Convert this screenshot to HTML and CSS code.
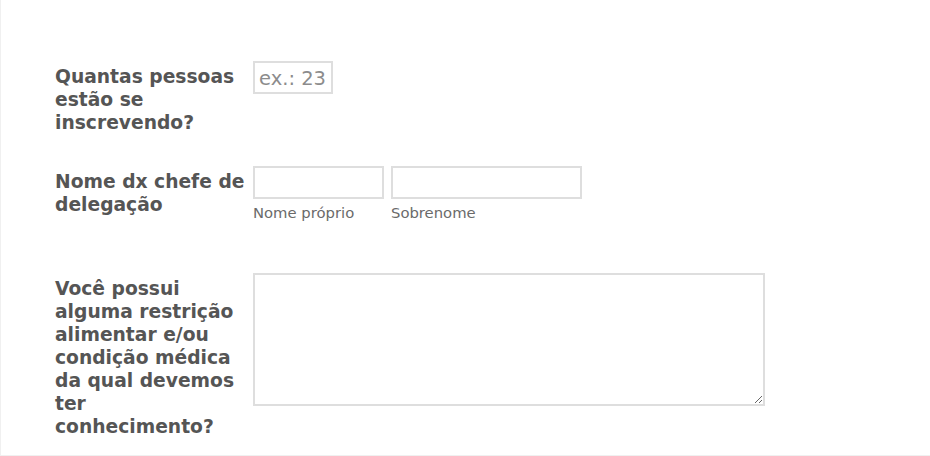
FILE: index.html
```html
<!DOCTYPE html>
<html lang="pt">

<head>
  <meta charset="UTF-8">
  <meta name="viewport" content="width=device-width, initial-scale=1.0">
  <title>Inscrição</title>
  <link rel="stylesheet" href="styles.css">
</head>

<body>
  <div class="form_all">
    <ul class="form_section">
      <li class="form_line line_count">
        <label class="form_label" for="input_count">Quantas pessoas estão se inscrevendo?</label>
        <div class="form_input">
          <input type="text" id="input_count" class="form_textbox count_box" placeholder="ex.: 23">
        </div>
      </li>

      <li class="form_line line_name">
        <label class="form_label" for="first_name">Nome dx chefe de delegação</label>
        <div class="form_input name_group">
          <span class="name_part">
            <input type="text" id="first_name" class="form_textbox first_box">
            <label class="form_sublabel" for="first_name">Nome próprio</label>
          </span>
          <span class="name_part">
            <input type="text" id="last_name" class="form_textbox last_box">
            <label class="form_sublabel" for="last_name">Sobrenome</label>
          </span>
        </div>
      </li>

      <li class="form_line line_notes">
        <label class="form_label" for="input_notes">Você possui alguma restrição alimentar e/ou condição médica da qual devemos ter conhecimento?</label>
        <div class="form_input">
          <textarea id="input_notes" class="form_textarea"></textarea>
        </div>
      </li>
    </ul>
  </div>
</body>

</html>
```

FILE: styles.css
```css
* {
  box-sizing: border-box;
  -webkit-box-sizing: border-box;
}

html,
body {
  margin: 0;
  padding: 0;
  background-color: #fff;
  overflow: hidden;
}

body {
  font-family: "DejaVu Sans", Verdana, sans-serif;
  color: #555;
}

.form_all {
  width: 960px;
  height: 456px;
  border-left: 1px solid #f0f0f0;
  border-bottom: 1px solid #f0f0f0;
  padding-top: 61px;
}

.form_section {
  list-style: none;
  margin: 0;
  padding: 0 0 0 54px;
}

.form_line {
  display: flex;
  align-items: flex-start;
}

.line_count {
  margin-bottom: 32px;
}

.line_name {
  margin-bottom: 51px;
}

.form_label {
  width: 198px;
  flex-shrink: 0;
  padding-top: 4px;
  padding-right: 6px;
  font-size: 18.7px;
  line-height: 23px;
  font-weight: bold;
  color: #555;
}

.form_textbox {
  display: block;
  height: 33px;
  margin: 0;
  padding: 2px 4px 0;
  border: 2px solid #dedede;
  background-color: #fff;
  font-family: "DejaVu Sans", Verdana, sans-serif;
  font-size: 19.5px;
  color: #555;
  outline: none;
}

.form_textbox::placeholder {
  color: #8c8c8c;
}

.count_box {
  width: 80px;
}

.name_group {
  display: flex;
  gap: 7px;
}

.first_box {
  width: 131px;
}

.last_box {
  width: 191px;
}

.form_sublabel {
  display: block;
  margin-top: 5px;
  font-size: 14.8px;
  line-height: 18px;
  color: #6a6a6a;
}

.form_textarea {
  display: block;
  width: 512px;
  height: 133px;
  margin: 0;
  border: 2px solid #dedede;
  resize: both;
  outline: none;
}
```
